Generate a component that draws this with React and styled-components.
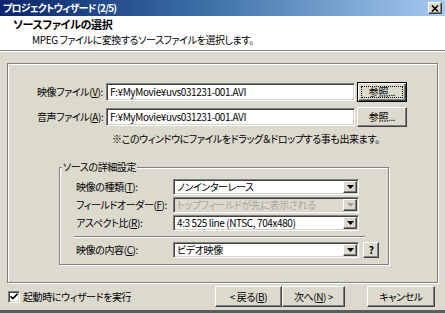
import React from "react";
import styled, { createGlobalStyle, css } from "styled-components";

const GlobalStyle = createGlobalStyle`
  html, body {
    margin: 0;
    padding: 0;
    background: #dcd9cd;
  }
  body {
    font-family: "Noto Sans CJK JP", "Noto Sans", sans-serif;
    font-size: 10px;
    line-height: 12px;
    letter-spacing: -0.4px;
    color: #000;
    font-feature-settings: "palt";
  }
  * { box-sizing: border-box; }
`;

const sunken = css`
  border: 1px solid;
  border-color: #808080 #ffffff #ffffff #808080;
  box-shadow: inset 1px 1px 0 #404040, inset -1px -1px 0 #d4d0c8;
`;

const raised = css`
  border: 1px solid;
  border-color: #ffffff #404040 #404040 #ffffff;
  box-shadow: inset -1px -1px 0 #808080;
  background: #dcd9cd;
`;

const Window = styled.div`
  width: 445px;
  height: 313px;
  display: flex;
  flex-direction: column;
  background: #dcd9cd;
  border-bottom: 3px solid #5c5c5c;
`;

const TitleBar = styled.div`
  height: 16px;
  flex: none;
  display: flex;
  align-items: center;
  justify-content: space-between;
  padding: 0 3px 0 3px;
  background: linear-gradient(90deg, #0a246a 0%, #3a6ea5 45%, #a6caf0 100%);
`;

const TitleText = styled.span`
  color: #fff;
  font-weight: bold;
  font-size: 10px;
  letter-spacing: -0.8px;
`;

const CloseBox = styled.div`
  ${raised};
  width: 14px;
  height: 12px;
  display: flex;
  align-items: center;
  justify-content: center;
`;

const Header = styled.div`
  height: 34px;
  flex: none;
  background: #fff;
  display: flex;
  flex-direction: column;
  padding: 2px 0 0 13px;
`;

const HeaderTitle = styled.div`
  font-weight: bold;
  font-size: 11px;
  line-height: 13px;
  letter-spacing: -0.3px;
`;

const HeaderSub = styled.div`
  margin-top: 2px;
  padding-left: 19px;
  line-height: 14px;
`;

const HeaderRule = styled.div`
  height: 2px;
  flex: none;
  border-top: 1px solid #808080;
  border-bottom: 1px solid #ffffff;
`;

const Body = styled.div`
  flex: 1;
  padding: 11px 7px 0 7px;
  display: flex;
  flex-direction: column;
`;

const Panel = styled.div`
  flex: 1;
  border: 1px solid #808080;
  box-shadow: inset 1px 1px 0 #fff, 1px 1px 0 #fff;
  padding: 18px 0 0 29px;
  display: flex;
  flex-direction: column;
`;

const FileRow = styled.div`
  display: flex;
  align-items: center;
  height: 20px;
  margin-top: ${(p) => p.$gap || 0}px;
`;

const FieldLabel = styled.span`
  width: ${(p) => p.$w}px;
  flex: none;
  white-space: nowrap;
`;

const TextField = styled.div`
  ${sunken};
  width: 249px;
  height: 18px;
  background: #fff;
  padding: 2px 3px 0 3px;
  white-space: nowrap;
`;

const PushButton = styled.button`
  ${raised};
  position: relative;
  width: ${(p) => p.$w}px;
  height: ${(p) => p.$h || 21}px;
  margin-left: ${(p) => p.$ml || 0}px;
  padding: 0;
  font: inherit;
  letter-spacing: inherit;
  font-feature-settings: inherit;
  font-weight: ${(p) => (p.$bold ? "bold" : "normal")};
  color: #000;
  flex: none;
  ${(p) =>
    p.$default &&
    css`
      border: 1px solid #000;
      box-shadow: inset 1px 1px 0 #fff, inset -1px -1px 0 #404040,
        inset -2px -2px 0 #808080;
      &::after {
        content: "";
        position: absolute;
        inset: 3px;
        border: 1px dotted #000;
      }
    `}
`;

const Note = styled.div`
  margin: 6px 0 0 75px;
  white-space: nowrap;
`;

const Group = styled.fieldset`
  margin: 16px 0 0 22px;
  width: 330px;
  padding: 6px 0 6px 16px;
  border: 1px solid #808080;
  box-shadow: inset 1px 1px 0 #fff, 1px 1px 0 #fff;
  display: flex;
  flex-direction: column;
`;

const Legend = styled.legend`
  margin-left: -14px;
  padding: 0 1px;
  line-height: 12px;
  background: #dcd9cd;
`;

const SelectRow = styled.div`
  display: flex;
  align-items: center;
  height: 16px;
  margin-top: ${(p) => p.$gap || 0}px;
`;

const Select = styled.div`
  ${sunken};
  width: 186px;
  height: 16px;
  display: flex;
  align-items: stretch;
  background: ${(p) => (p.$disabled ? "#dcd9cd" : "#fff")};
  color: ${(p) => (p.$disabled ? "#a8a69c" : "#000")};
  padding: 1px;
`;

const SelectText = styled.span`
  flex: 1;
  padding-left: 2px;
  white-space: nowrap;
  line-height: 12px;
`;

const ArrowBox = styled.span`
  ${raised};
  width: 14px;
  flex: none;
  display: flex;
  align-items: center;
  justify-content: center;
`;

const GroupRule = styled.div`
  margin: 5px 0 0 -2px;
  width: 291px;
  height: 2px;
  border-top: 1px solid #808080;
  border-bottom: 1px solid #fff;
`;

const Footer = styled.div`
  height: 27px;
  flex: none;
  display: flex;
  align-items: center;
  padding: 0 10px 0 8px;
`;

const CheckBox = styled.span`
  ${sunken};
  width: 12px;
  height: 12px;
  background: #fff;
  display: flex;
  align-items: center;
  justify-content: center;
`;

const CheckLabel = styled.span`
  margin-left: 3px;
  flex: 1;
`;

const Arrow = ({ disabled }) => (
  <ArrowBox>
    <svg width="7" height="4" viewBox="0 0 7 4">
      <path d="M0 0h7L3.5 4z" fill={disabled ? "#a0a0a0" : "#000"} />
    </svg>
  </ArrowBox>
);

const Dropdown = ({ value, disabled }) => (
  <Select $disabled={disabled}>
    <SelectText>{value}</SelectText>
    <Arrow disabled={disabled} />
  </Select>
);

export default function App() {
  return (
    <>
      <GlobalStyle />
      <Window>
        <TitleBar>
          <TitleText>プロジェクトウィザード (2/5)</TitleText>
          <CloseBox>
            <svg width="8" height="7" viewBox="0 0 8 7">
              <path d="M1 0.5l6 6M7 0.5l-6 6" stroke="#000" strokeWidth="1.6" />
            </svg>
          </CloseBox>
        </TitleBar>
        <Header>
          <HeaderTitle>ソースファイルの選択</HeaderTitle>
          <HeaderSub>MPEG ファイルに変換するソースファイルを選択します。</HeaderSub>
        </Header>
        <HeaderRule />
        <Body>
          <Panel>
            <FileRow>
              <FieldLabel $w={69}>
                映像ファイル(<u>V</u>):
              </FieldLabel>
              <TextField>F:¥MyMovie¥uvs031231-001.AVI</TextField>
              <PushButton $w={50} $h={20} $ml={2} $default>
                参照...
              </PushButton>
            </FileRow>
            <FileRow $gap={5}>
              <FieldLabel $w={69}>
                音声ファイル(<u>A</u>):
              </FieldLabel>
              <TextField>F:¥MyMovie¥uvs031231-001.AVI</TextField>
              <PushButton $w={50} $h={20} $ml={2}>
                参照...
              </PushButton>
            </FileRow>
            <Note>※このウィンドウにファイルをドラッグ＆ドロップする事も出来ます。</Note>
            <Group>
              <Legend>ソースの詳細設定</Legend>
              <SelectRow>
                <FieldLabel $w={97}>
                  映像の種類(<u>T</u>):
                </FieldLabel>
                <Dropdown value="ノンインターレース" />
              </SelectRow>
              <SelectRow $gap={2}>
                <FieldLabel $w={97}>
                  フィールドオーダー(<u>F</u>):
                </FieldLabel>
                <Dropdown value="トップフィールドが先に表示される" disabled />
              </SelectRow>
              <SelectRow $gap={2}>
                <FieldLabel $w={97}>
                  アスペクト比(<u>R</u>):
                </FieldLabel>
                <Dropdown value="4:3 525 line (NTSC, 704x480)" />
              </SelectRow>
              <GroupRule />
              <SelectRow $gap={4}>
                <FieldLabel $w={97}>
                  映像の内容(<u>C</u>):
                </FieldLabel>
                <Dropdown value="ビデオ映像" />
                <PushButton $w={16} $h={16} $ml={4} $bold>
                  ?
                </PushButton>
              </SelectRow>
            </Group>
          </Panel>
        </Body>
        <Footer>
          <CheckBox>
            <svg width="8" height="7" viewBox="0 0 8 7">
              <path d="M0.5 3.2l2.3 2.3L7.5 0.8" stroke="#000" strokeWidth="1.6" fill="none" />
            </svg>
          </CheckBox>
          <CheckLabel>起動時にウィザードを実行</CheckLabel>
          <PushButton $w={67}>
            {"< "}戻る(<u>B</u>)
          </PushButton>
          <PushButton $w={63}>
            次へ(<u>N</u>){" >"}
          </PushButton>
          <PushButton $w={68} $ml={22}>
            キャンセル
          </PushButton>
        </Footer>
      </Window>
    </>
  );
}
